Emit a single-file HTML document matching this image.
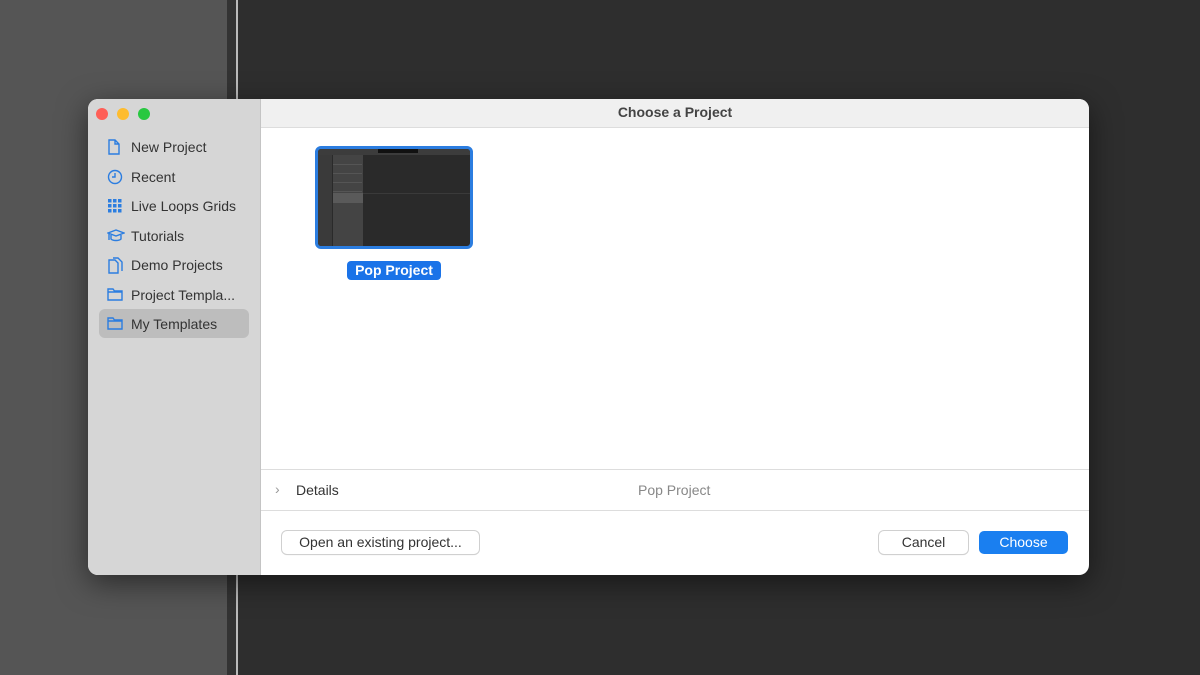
<!DOCTYPE html>
<html><head><style>
*{margin:0;padding:0;box-sizing:border-box}
body{width:1200px;height:675px;overflow:hidden;background:#2e2e2e;font-family:"Liberation Sans",sans-serif;position:relative}
.l{position:absolute;left:0;top:0;width:227px;height:675px;background:#555}
.l2{position:absolute;left:227px;top:0;width:9px;height:675px;background:#333}
.ln{position:absolute;left:236px;top:0;width:2px;height:675px;background:#bbb}
.win{position:absolute;left:88px;top:99px;width:1001px;height:476px;border-radius:10px;overflow:hidden;background:#fff;box-shadow:0 8px 30px rgba(0,0,0,.5)}
.side{position:absolute;left:0;top:0;width:173px;height:476px;background:#d6d6d6;border-right:1px solid #c4c4c4}
.dot{position:absolute;top:9px;width:12px;height:12px;border-radius:50%}
.item{position:absolute;left:11px;width:150px;height:29px;font-size:14px;color:#333;line-height:31px;padding-left:32px}
.item svg{position:absolute;left:8px;top:7px}
.sel{background:#bdbdbd;border-radius:6px}
.title{position:absolute;left:173px;top:0;right:0;height:29px;background:#f0f0f0;border-bottom:1px solid #ddd;text-align:center;font-size:14px;font-weight:bold;color:#444;line-height:27px}
.thumb{position:absolute;left:227px;top:47px;width:158px;height:103px;border:3px solid #2b7de0;border-radius:6px;background:#2a2a2a;overflow:hidden}
.lab{position:absolute;left:259px;top:162px;width:94px;height:19px;background:#1a73e8;border-radius:4px;color:#fff;font-weight:bold;font-size:14px;text-align:center;line-height:19px}
.det{position:absolute;left:173px;right:0;top:370px;height:42px;border-top:1px solid #ddd;border-bottom:1px solid #ddd;font-size:14px}
.btn{position:absolute;top:432px;height:23px;border-radius:5px;background:#fff;box-shadow:0 0 0 1px #d0d0d0,0 1px 1px rgba(0,0,0,.15);font-size:14px;color:#333;text-align:center;line-height:23px}
.tr{position:absolute;left:15px;width:29px;height:1px;background:#555}
</style></head><body>
<div class="l"></div><div class="l2"></div><div class="ln"></div>
<div class="win">
<div class="side">
<div class="dot" style="left:8px;background:#fe5f57"></div>
<div class="dot" style="left:29px;background:#febc2e"></div>
<div class="dot" style="left:50px;background:#28c840"></div>
<div class="item" style="top:33px"><svg width="14" height="16" viewBox="0 0 14 16" fill="none" stroke="#2b7de0" stroke-width="1.4"><path d="M2 1h6l4 4v10H2z M8 1v4h4"/></svg>New Project</div>
<div class="item" style="top:63px"><svg width="16" height="16" viewBox="0 0 16 16" fill="none" stroke="#2b7de0" stroke-width="1.4"><circle cx="8" cy="8" r="6.5"/><path d="M8 4v4H5"/></svg>Recent</div>
<div class="item" style="top:92px"><svg width="16" height="16" viewBox="0 0 16 16" fill="#2b7de0"><rect x="1" y="1" width="3.5" height="3.5"/><rect x="6" y="1" width="3.5" height="3.5"/><rect x="11" y="1" width="3.5" height="3.5"/><rect x="1" y="6" width="3.5" height="3.5"/><rect x="6" y="6" width="3.5" height="3.5"/><rect x="11" y="6" width="3.5" height="3.5"/><rect x="1" y="11" width="3.5" height="3.5"/><rect x="6" y="11" width="3.5" height="3.5"/><rect x="11" y="11" width="3.5" height="3.5"/></svg>Live Loops Grids</div>
<div class="item" style="top:122px"><svg width="18" height="16" viewBox="0 0 18 16" fill="none" stroke="#2b7de0" stroke-width="1.4"><path d="M1 5l8-3 8 3-8 3z M4 7v4c2 2 8 2 10 0V7 M2 6v6"/></svg>Tutorials</div>
<div class="item" style="top:151px"><svg width="16" height="17" viewBox="0 0 16 17" fill="none" stroke="#2b7de0" stroke-width="1.4"><path d="M2 3h6l3 3v10H2z M6 1h5l4 4v9"/></svg>Demo Projects</div>
<div class="item" style="top:181px"><svg width="16" height="14" viewBox="0 0 16 14" fill="none" stroke="#2b7de0" stroke-width="1.4"><path d="M1 2h5l1.5 2H15v9H1z M1 5h14"/></svg>Project Templa...</div>
<div class="item sel" style="top:210px"><svg width="16" height="14" viewBox="0 0 16 14" fill="none" stroke="#2b7de0" stroke-width="1.4"><path d="M1 2h5l1.5 2H15v9H1z M1 5h14"/></svg>My Templates</div>
</div>
<div class="title">Choose a Project</div>
<div class="thumb">
<div style="position:absolute;left:0;top:0;right:0;height:6px;background:#3c3c3c"></div>
<div style="position:absolute;left:60px;top:0;width:40px;height:4px;background:#111"></div>
<div style="position:absolute;left:0;top:6px;width:14px;bottom:0;background:#3a3a3a"></div>
<div style="position:absolute;left:15px;top:6px;width:30px;bottom:0;background:#444"></div>
<div style="position:absolute;left:15px;top:44px;width:30px;height:10px;background:#5a5a5a"></div>
<div class="tr" style="top:15px"></div><div class="tr" style="top:24px"></div><div class="tr" style="top:33px"></div><div class="tr" style="top:42px"></div>
<div style="position:absolute;left:45px;top:44px;right:0;height:1px;background:#3a3a3a"></div>
</div>
<div class="lab">Pop Project</div>
<div class="det"><span style="position:absolute;left:14px;top:11px;color:#999">›</span><span style="position:absolute;left:35px;top:12px;color:#333">Details</span><span style="position:absolute;left:377px;top:12px;color:#888">Pop Project</span></div>
<div class="btn" style="left:194px;width:197px">Open an existing project...</div>
<div class="btn" style="left:791px;width:89px">Cancel</div>
<div class="btn" style="left:891px;width:89px;background:#1a7ff0;color:#fff;box-shadow:none">Choose</div>
</div>
</body></html>
